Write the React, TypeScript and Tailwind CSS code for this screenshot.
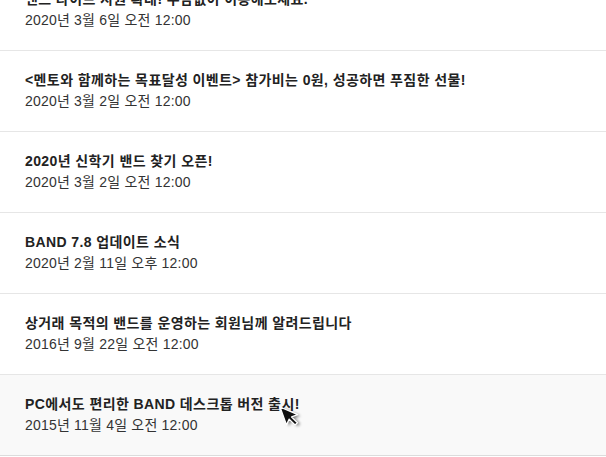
import React from "react";

interface Notice {
  title: string;
  date: string;
}

const notices: Notice[] = [
  { title: "밴드 라이브 지원 확대! 부담없이 이용해보세요.", date: "2020년 3월 6일 오전 12:00" },
  { title: "<멘토와 함께하는 목표달성 이벤트> 참가비는 0원, 성공하면 푸짐한 선물!", date: "2020년 3월 2일 오전 12:00" },
  { title: "2020년 신학기 밴드 찾기 오픈!", date: "2020년 3월 2일 오전 12:00" },
  { title: "BAND 7.8 업데이트 소식", date: "2020년 2월 11일 오후 12:00" },
  { title: "상거래 목적의 밴드를 운영하는 회원님께 알려드립니다", date: "2016년 9월 22일 오전 12:00" },
  { title: "PC에서도 편리한 BAND 데스크톱 버전 출시!", date: "2015년 11월 4일 오전 12:00" },
];

// mouse pointer hovering the last row
function Cursor() {
  return (
    <svg
      className="absolute left-[276px] top-[404px]"
      width="30"
      height="30"
      viewBox="0 0 30 30"
    >
      <defs>
        <filter id="sh" x="-50%" y="-50%" width="200%" height="200%">
          <feGaussianBlur stdDeviation="1.6" />
        </filter>
      </defs>
      <g transform="rotate(-20 4 3)">
        <path d="M6 5 L6 24 L10.5 19.5 L14 27 L17 25.8 L13.5 18.3 L20 18.3 Z" fill="#000" opacity="0.55" filter="url(#sh)" />
        <path d="M4 3 L4 22 L8.5 17.5 L12 25 L15 23.8 L11.5 16.3 L18 16.3 Z" fill="#111" stroke="#fff" strokeWidth="1.3" strokeLinejoin="round" />
      </g>
    </svg>
  );
}

export default function App() {
  return (
    <div className="relative w-[606px] h-[457px] overflow-hidden bg-white font-['Liberation_Sans','Noto_Sans_CJK_KR',sans-serif]">
      <ul className="-mt-[30px]">
        {notices.map((n, i) => {
          const last = i === notices.length - 1;
          return (
            <li
              key={i}
              className={`px-[25px] py-[19px] border-b ${
                last ? "bg-[#f9f9f9] border-[#dcdcdc]" : "border-[#e6e6e6]"
              }`}
            >
              <p className="text-[14px] leading-[21px] tracking-[0.4px] font-bold text-[#222]">{n.title}</p>
              <p className="text-[14px] leading-[21px] tracking-[0.2px] text-[#333]">{n.date}</p>
            </li>
          );
        })}
      </ul>
      <Cursor />
    </div>
  );
}
